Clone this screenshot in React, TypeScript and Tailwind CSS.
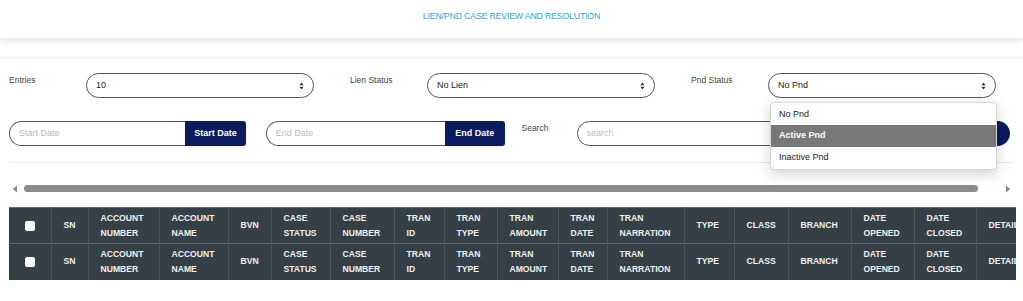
import React from "react";

const COLS: { label: string[]; w: number }[] = [
  { label: ["SN"], w: 37 },
  { label: ["ACCOUNT", "NUMBER"], w: 71 },
  { label: ["ACCOUNT", "NAME"], w: 69 },
  { label: ["BVN"], w: 43 },
  { label: ["CASE", "STATUS"], w: 59 },
  { label: ["CASE", "NUMBER"], w: 64 },
  { label: ["TRAN", "ID"], w: 50 },
  { label: ["TRAN", "TYPE"], w: 53 },
  { label: ["TRAN", "AMOUNT"], w: 61 },
  { label: ["TRAN", "DATE"], w: 49 },
  { label: ["TRAN", "NARRATION"], w: 77 },
  { label: ["TYPE"], w: 50 },
  { label: ["CLASS"], w: 54 },
  { label: ["BRANCH"], w: 63 },
  { label: ["DATE", "OPENED"], w: 63 },
  { label: ["DATE", "CLOSED"], w: 62 },
  { label: ["DETAILS"], w: 70 },
];

function Arrows() {
  return (
    <svg width="5" height="8" viewBox="0 0 5 8" className="shrink-0">
      <path d="M2.5 0.5 L4.6 3.2 H0.4 Z" fill="#333" />
      <path d="M2.5 7.5 L4.6 4.8 H0.4 Z" fill="#333" />
    </svg>
  );
}

function Select({ value }: { value: string }) {
  return (
    <div className="flex h-[25px] w-[228px] items-center justify-between rounded-full border border-[#555] pl-[9px] pr-[9px] text-[9px] text-[#222]">
      <span>{value}</span>
      <Arrows />
    </div>
  );
}

function Field({ label, value }: { label: string; value: string }) {
  return (
    <div className="flex px-[9px]">
      <div className="w-[77px] pt-[1px] text-[8.5px] text-[#444]">{label}</div>
      <Select value={value} />
    </div>
  );
}

function DateGroup({ placeholder, className }: { placeholder: string; className: string }) {
  return (
    <div className={`flex h-[25px] ${className}`}>
      <div className="flex w-[176px] items-center rounded-l-full border border-r-0 border-[#555] pl-[9px] text-[9px] text-[#bbb]">
        {placeholder}
      </div>
      <div className="flex w-[61px] items-center justify-center rounded-r-[3px] bg-[#0c1a5e] text-[9px] font-bold text-white">
        {placeholder}
      </div>
    </div>
  );
}

function HeaderRow() {
  return (
    <tr className="h-[36px] border-t border-[#5f6a70]">
      <td style={{ width: 42 }} className="border-r border-[#4a565c] text-center align-middle">
        <span className="mx-auto block h-[10px] w-[10px] rounded-[2px] bg-white" />
      </td>
      {COLS.map((c, i) => (
        <td
          key={i}
          style={{ width: c.w }}
          className="overflow-hidden border-r border-[#4a565c] px-[12px] align-middle text-[8.6px] font-bold leading-[15px] text-[#f2f2f2]"
        >
          {c.label.map((l, j) => (
            <div key={j} className="whitespace-nowrap">{l}</div>
          ))}
        </td>
      ))}
    </tr>
  );
}

export default function App() {
  return (
    <div className="relative h-[301px] w-[1023px] overflow-hidden bg-white font-['Liberation_Sans',Arial,sans-serif]">
      {/* header */}
      <div className="flex h-[38px] justify-center bg-white pt-[10px] shadow-[0_3px_6px_rgba(0,0,0,0.09)]">
        <span className="text-[8.8px] tracking-[-0.2px] text-[#2aa9e6]">LIEN/PND CASE REVIEW AND RESOLUTION</span>
      </div>

      <div className="mt-[19px] border-t border-[#eeeeee]">
        <div className="grid grid-cols-3 pt-[15px]">
          <Field label="Entries" value="10" />
          <Field label="Lien Status" value="No Lien" />
          <Field label="Pnd Status" value="No Pnd" />
        </div>

        <div className="mt-[23px] grid grid-cols-4">
          <DateGroup placeholder="Start Date" className="px-[9px]" />
          <DateGroup placeholder="End Date" className="pl-[10px] [&>div:first-child]:w-[179px] [&>div:last-child]:w-[60px]" />
          <div className="col-span-2 flex px-[10px]">
            <div className="w-[55px] pt-[1px] text-[8.5px] text-[#444]">Search</div>
            <div className="flex h-[25px] w-[300px] items-center rounded-full border border-[#555] pl-[9px] text-[9px] text-[#bbb]">
              search
            </div>
            <div className="ml-auto mr-[3px] flex h-[25px] w-[60px] items-center justify-center rounded-full bg-[#0c1a5e] text-[9px] font-bold text-white">
              View
            </div>
          </div>
        </div>

        <div className="mx-[9px] mt-[16px] border-t border-[#e8e8e8]" />
      </div>

      {/* scrollbar */}
      <div className="mt-[21px] flex h-[9px] items-center px-[12px]">
        <svg width="6" height="8" viewBox="0 0 6 8">
          <path d="M5 0.5 V7.5 L0.8 4 Z" fill="#8a8a8a" />
        </svg>
        <div className="ml-[6px] h-[7px] w-[954px] rounded-full bg-[#8c8c8c]" />
        <svg width="6" height="8" viewBox="0 0 6 8" className="ml-auto">
          <path d="M1 0.5 V7.5 L5.2 4 Z" fill="#8a8a8a" />
        </svg>
      </div>

      {/* table */}
      <div className="mt-[14px] ml-[9px] mr-[7px] overflow-hidden">
        <table className="w-[1037px] table-fixed border-collapse bg-[#343f46]">
          <tbody>
            <HeaderRow />
            <HeaderRow />
          </tbody>
        </table>
      </div>

      {/* open dropdown */}
      <div className="absolute left-[770px] top-[102px] w-[227px] overflow-hidden rounded-[4px] border border-[#d6d6d6] bg-white py-[1px] shadow-[0_4px_14px_rgba(0,0,0,0.18)]">
        <div className="flex h-[21px] items-center px-[8px] text-[9px] text-[#222]">No Pnd</div>
        <div className="flex h-[22px] items-center bg-[#787878] px-[8px] text-[9px] font-bold text-white">Active Pnd</div>
        <div className="flex h-[21px] items-center px-[8px] text-[9px] text-[#222]">Inactive Pnd</div>
      </div>
    </div>
  );
}
